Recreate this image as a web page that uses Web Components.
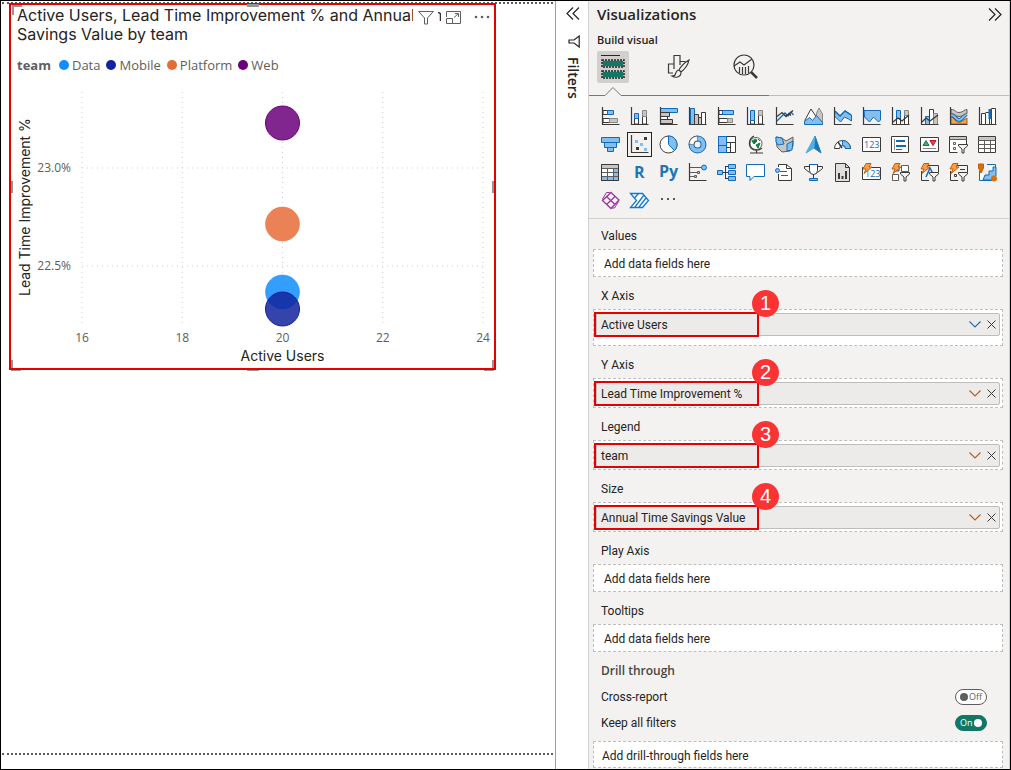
<!DOCTYPE html>
<html lang="en">
<head>
<meta charset="utf-8">
<title>Report editor</title>
<style>
body{margin:0;background:#fff;color:#252423;font:12px/16px Roboto,"Noto Sans",sans-serif}
</style>
</head>
<body>
<report-editor></report-editor>
<script>
function define(name, html, setup) {
  const t = document.createElement('template');
  t.innerHTML = html;
  customElements.define(name, class extends HTMLElement {
    connectedCallback() {
      if (this.shadowRoot) return;
      this.attachShadow({mode: 'open'}).appendChild(t.content.cloneNode(true));
      if (setup) setup(this, this.shadowRoot);
    }
  });
}

/* ---------- chart ---------- */
define('scatter-plot', `
<style>
:host{display:block}
svg{display:block;width:100%;height:234px;overflow:visible}
line{stroke:#cfcfcf;stroke-width:1;stroke-dasharray:1 4}
text{font-size:12px;fill:#605e5c}
circle{fill-opacity:.85;stroke-width:1}
</style>
<svg role="img" aria-label="Scatter chart">
  <g class="grid"></g>
  <circle cx="50%" cy="31" r="17" fill="#6b007b" stroke="#6b007b"/>
  <circle cx="50%" cy="132" r="17" fill="#e66c37" stroke="#e66c37" stroke-opacity=".5"/>
  <circle cx="50%" cy="200" r="17" fill="#118dff" stroke="#118dff" stroke-opacity=".5"/>
  <circle cx="50%" cy="217" r="17" fill="#12239e" stroke="#12239e"/>
</svg>`, (el, root) => {
  let s = '';
  [16, 18, 20, 22, 24].forEach((v, i) => {
    s += `<line x1="${i * 25}%" x2="${i * 25}%" y1="0" y2="234"/><text x="${i * 25}%" y="250" text-anchor="middle">${v}</text>`;
  });
  [['23.0%', 76], ['22.5%', 174]].forEach(([v, y]) => {
    s += `<line x1="0" x2="100%" y1="${y}" y2="${y}"/><text x="-11" y="${y + 4}" text-anchor="end">${v}</text>`;
  });
  root.querySelector('.grid').innerHTML = s;
});

define('legend-entry', `
<style>
:host{display:flex;align-items:center;gap:3px}
i{width:10px;height:10px;border-radius:50%;background:var(--dot)}
</style><i></i><slot></slot>`, el => el.style.setProperty('--dot', el.getAttribute('color')));

define('chart-visual', `
<style>
:host{display:block;position:relative;box-sizing:border-box;border:2px solid #e60000;background:#fff;padding:1px 11px 0 6px;height:367px}
h2{margin:0;font:400 16px/19px Inter,sans-serif}
.legend{display:flex;align-items:center;gap:6px;margin-top:12px;height:18px;font:13px/18px "Open Sans",sans-serif;color:#605e5c}
.legend b{margin-right:2px}
.body{display:flex;margin-top:18px;font-family:"Open Sans",sans-serif}
.ytitle{width:16px;writing-mode:vertical-rl;transform:rotate(180deg);text-align:center;font:14px/16px Inter,sans-serif;height:230px}
scatter-plot{flex:1;margin-left:49px}
.xtitle{margin:20px 0 0 65px;text-align:center;font:14px/20px Inter,sans-serif}
.tools{position:absolute;top:3px;right:0;display:flex;gap:3px}
button{border:0;padding:0;background:#fff;height:18px;width:25px;display:flex;align-items:center;justify-content:center}
svg{display:block}
.h{position:absolute;background:#979593}
.tc,.bc{left:50%;margin-left:-6px;width:12px;height:3px}.tc{top:-1px}.bc{bottom:-3px}
.lm,.rm{top:50%;margin-top:-6px;width:2px;height:12px}.lm{left:0}.rm{right:0}
.c{position:absolute;width:8px;height:8px;border:0 solid #979593}
.tl{left:1px;top:0;border-width:2px 0 0 2px}
.bl{left:0;bottom:-3px;border-width:0 0 3px 2px}.br{right:0;bottom:-3px;border-width:0 2px 3px 0}
.frame{position:absolute;inset:-2px;border:2px solid #e60000;pointer-events:none}
</style>
<h2><slot></slot></h2>
<div class="legend"><b>team</b><legend-entry color="#118dff">Data</legend-entry><legend-entry color="#12239e">Mobile</legend-entry><legend-entry color="#e66c37">Platform</legend-entry><legend-entry color="#6b007b">Web</legend-entry></div>
<div class="body"><div class="ytitle">Lead Time Improvement %</div><scatter-plot></scatter-plot></div>
<div class="xtitle">Active Users</div>
<div class="tools">
<button aria-label="Filters"><svg width="16" height="15" fill="none" stroke="#605e5c"><path d="M.7 1.5h14.6L9.5 8v6h-3V8z"/></svg></button>
<button aria-label="Focus mode"><svg width="15" height="13" fill="none" stroke="#605e5c"><path d="M.5 6V.5h14v12h-8v-5h-6v5h6M8 6.500L12 3M9 2.500h3.500V6"/></svg></button>
<button aria-label="More options"><svg width="16" height="4" fill="#605e5c"><circle cx="2" cy="2" r="1.300"/><circle cx="8" cy="2" r="1.300"/><circle cx="14" cy="2" r="1.300"/></svg></button>
</div>
<span class="h bc"></span><span class="c bl"></span><span class="c br"></span>
<div class="frame"></div>
<span class="h tc"></span><span class="h lm"></span><span class="h rm"></span><span class="c tl"></span>`);

define('report-canvas', `
<style>
:host{display:block;min-width:0;padding:1px 2px 14px 1px}
.page{height:100%;box-sizing:border-box;border:dotted #605e5c;border-width:2px 0}
chart-visual{margin:-1px 57px 0 7px}
</style>
<div class="page"><chart-visual>Active Users, Lead Time Improvement % and Annual Time Savings Value by team</chart-visual></div>`);

/* ---------- collapsed filters pane ---------- */
define('filters-pane', `
<style>
:host{display:flex;flex-direction:column;align-items:center;box-sizing:border-box;width:33px;border-left:1px solid #a19f9d;background:#fff;padding:6px 0 0 1px}
button{border:0;background:none;padding:0;display:block}
svg{display:block}
.f{margin:15px 0 0 2px}
h2{margin:9px 0 0;writing-mode:vertical-rl;font:600 14px/20px "Open Sans",sans-serif}
</style>
<button aria-label="Expand"><svg width="14" height="13" fill="none" stroke="#252423" stroke-width="1.200"><path d="M7 .5l-6 6 6 6M13 .5l-6 6 6 6"/></svg></button>
<svg class="f" width="12" height="13" fill="none" stroke="#252423" stroke-width="1.200"><path d="M11.200 1v11L6 8H1V5h5z"/></svg>
<h2>Filters</h2>`);

/* ---------- visual gallery ---------- */
const K = '#3b3a39', B = '#0f6cbd', L = '#83beec', G = '#c8c6c4';
const p = (d, s = K, f = 'none', w = 1) => `<path d="${d}" stroke="${s}" fill="${f}" stroke-width="${w}"/>`;
const axes = p('M1.500 0V17.500H18.500', K, 'none', 1.2);
const bolt = p('M4 .5h5L7 4h3L2 10.500 4 6H1z', '#c75b00', '#f5a04c');
const fun = p('M9.500 9.500h9v1.500l-3.500 3v4h-2v-4l-3.500-3z', K, '#f3f2f1');
const txt = (t, x, y, s, c, w = 400) => `<text x="${x}" y="${y}" font-size="${s}" font-weight="${w}" fill="${c}">${t}</text>`;
const ICONS = {
 'Stacked bar': p('M2 3.500h5v4H2z', K, '#fff') + p('M6.500 3.500h6v4h-6z', B, L) + p('M2 11.500h7v4H2z', K, '#fff') + p('M8.500 11.500h8v4h-8z', '#8a8886', G) + axes,
 'Stacked column': p('M4.500 10v7h4v-7zM12.500 8v9h4V8z', K, '#fff') + p('M4.500 6.500h4v5h-4z', B, L) + p('M12.500 3.500h4v6h-4z', '#8a8886', G) + axes,
 'Clustered bar': p('M1.500 1.500h17v4h-17z', B, L) + p('M1.500 5.500h9v4h-9z', K, G) + p('M1.500 9.500h7v3h-7z', K, '#fff') + p('M1.500 12.500h12v4h-12z', K, G) + axes,
 'Clustered column': p('M2.500 1.500h4v16h-4z', B, L) + p('M6.500 7.500h4v10h-4z', K, G) + p('M10.500 10.500h3v7h-3z', K, G) + p('M13.500 5.500h4v12h-4z', K, '#fff') + axes,
 '100% bar': p('M2 3.500h4v4H2z', K, '#fff') + p('M5.500 3.500h11v4h-11z', B, L) + p('M2 11.500h9v4H2z', K, '#fff') + p('M10.500 11.500h5v4h-5z', '#8a8886', G) + axes,
 '100% column': p('M4.500 12v5h4v-5zM12.500 8v9h4V8z', K, '#fff') + p('M4.500 3.500h4v10h-4z', B, L) + p('M12.500 3.500h4v5h-4z', '#8a8886', G) + axes,
 'Line': axes + p('M2 14l8-8 3 3 3-4 2.500 3', B, 'none', 1.3) + p('M2 9.500l5-4 4 4 3-3 2 2M11 9.500l7-6', K, 'none', 1.3),
 'Area': p('M10 17l3-12 2-4 3.500 6v10z', '#8a8886', G) + p('M1 13l6-11 6 9-4 6H1z', K, '#fff') + p('M.5 17.500v-3l5-4 3 3 4-5 6 7v2z', B, L),
 'Stacked area': p('M2 4l5 5 5-5 6.500 4v6l-3-2-4-2-4 5-6-6z', B, L) + p('M2 4l5 5 5-5 6 4', B, 'none', 1.5) + axes,
 '100% area': p('M2 3.500h16.500V13l-2 2-5-5-4 5-5-5z', B, L) + axes,
 'Line and stacked column': p('M5.500 3.500h4v14h-4z', B, L) + p('M5.500 11.500h4v6h-4z', K, '#fff') + p('M13.500 8.500h4v9h-4z', K, '#fff') + p('M13.500 3.500h4v5h-4z', '#8a8886', G) + axes + p('M2 15l5-4 4 3 7-6', K, 'none', 1.3),
 'Line and clustered column': p('M5.500 9.500h4v8h-4z', B, L) + p('M9.500 2.500h4v15h-4z', K, '#fff') + p('M13.500 6.500h4v11h-4z', '#8a8886', G) + axes + p('M2 15l4-4 4 3 8-6', K, 'none', 1.3),
 'Ribbon': p('M2 17V9l5 5 3 2 8-5v6z', '#c75b00', '#f5a04c') + p('M2 8c5 0 4 5 8 5s4-5 8-6', B, 'none', 4) + p('M2 8c5 0 4 5 8 5s4-5 8-6', L, 'none', 2) + p('M2 2.500c5 0 4 3 8 3s5-3 8-3v4c-3 0-4 3-8 3s-4-3-8-3z', '#605e5c', G) + axes,
 'Waterfall': p('M3.500 6.500h4v11h-4zM7.500 5.500h4v12M13.500 1.500h4v16h-4z', K, '#fff') + p('M12 2v10', B, 'none', 3) + axes,
 'Funnel': p('M.5 2.500h18v5H.5zM3.500 7.500h12v5h-12zM6.500 12.500h6v4h-6z', B, L),
 'Scatter': axes + p('M14 3.500h3M6 13.500h3', K, 'none', 3) + p('M5 6.500h3M10 9.500h3M14 14.500h3', L, 'none', 3),
 'Pie': '<circle cx="9.500" cy="9.500" r="8.500" fill="#fff" stroke="#3b3a39"/>' + p('M9.500 9.500V1a8.500 8.500 0 0 1 6 14.500z', B, L),
 'Donut': '<circle cx="9.500" cy="9.500" r="6" fill="none" stroke="#0f6cbd" stroke-width="6"/><circle cx="9.500" cy="9.500" r="6" fill="none" stroke="#83beec" stroke-width="4"/>' + p('M9.500 3.500a6 6 0 0 0-6 6', '#605e5c', 'none', 6) + p('M9 3.500a6 6 0 0 0-5.500 5.500', '#fff', 'none', 4),
 'Treemap': p('M1.500 1.500h17v16h-17z', K, '#fff') + p('M9.500 1.500v16M9.500 7.500h9M13.500 7.500v10M9.500 12.500h4', K) + p('M1.500 1.500h8v16h-8z', B, L) + p('M1.500 10.500h8', B),
 'Map': '<circle cx="10" cy="8.500" r="6" fill="#fff" stroke="#605e5c"/>' + p('M6 6l4-2 1 2-3 3zM10 10l4-2-2 5zM12 4l2 2', '#107c41', '#107c41') + p('M8 1a8 8 0 0 0-3 12c3 3 8 3 11 0M10.500 15v3M4 18h13', K, 'none', 1.2),
 'Filled map': p('M1 2l6 1 4 3 7-4v9l-3 5-8 1-5-5z', '#605e5c', G) + p('M1 2l6 1 2 6-6 1-2-3zM12 9l6-3-1 9-5 1z', B, L),
 'Azure map': p('M11 1l6 17-7-5z', '#1b76b8', '#1b76b8') + p('M11 1L2 18l8-5z', '#50a8dc', '#50b0e0'),
 'Gauge': p('M1.500 13.500a8 8 0 0 1 16 0h-5a3 3 0 0 0-6 0z', K, '#fff') + p('M9.500 5.500a8 8 0 0 1 8 8h-5a3 3 0 0 0-3-3z', B, L) + p('M9 13l-4-6', K, 'none', 1.5),
 'Card': p('M.5 2.500h18v14H.5z', K, '#fff') + txt('123', 2, 13, 9, B),
 'Multi-row card': p('M.5 1.500h17v16H.5z', K, '#fff') + p('M3.500 4v11', '#8a8886') + p('M5 6h9M5 11h10', B, 'none', 2) + p('M5 14.500h6', B),
 'KPI': p('M.5 2.500h18v14H.5z', K, '#fff') + p('M3 10.500l3-5 3 5z', '#107c41', '#55a36f') + p('M10 5.500h6l-3 5z', '#c50f1f', '#e8434a') + p('M3 13.500h13', '#8a8886'),
 'Slicer': p('M17.500 9V1.500H.5v16h8', K, '#fff') + p('M1 3h16', G, 'none', 2) + p('M.5 4.500h17M4.500 7.500h2v2h-2zM4.500 12.500h2v2h-2z', '#605e5c') + fun,
 'Table': p('M.5 1.500h17v16H.5z', K, '#fff') + p('M1 3.500h16', G, 'none', 3) + p('M.5 5.500h17M.5 9.500h17M.5 13.500h17M6.500 5.500v12M12.500 5.500v12', '#605e5c'),
 'Matrix': p('M.5 1.500h17v16H.5z', K, '#fff') + p('M12.500 5.500h5v12h-17v-4h12z', B, L) + p('M1 3.500h16', G, 'none', 3) + p('M.5 5.500h17M.5 9.500h17M.5 13.500h17M6.500 5.500v12M12.500 5.500v12', '#605e5c') + p('M.5 1.500h17v16H.5z', K),
 'R script': txt('R', 4, 15, 16, '#1b76b8', 700),
 'Python': txt('Py', 0, 14, 16, '#1b76b8', 700),
 'Key influencers': axes + p('M2 4.500h12', B) + '<circle cx="16" cy="4.500" r="2.500" fill="#83beec" stroke="#0f6cbd"/>' + p('M2 9.500h7M2 13.500h4', '#605e5c') + p('M9.500 8.500h2v2h-2zM6.500 12.500h2v2h-2z', '#605e5c', G),
 'Decomposition tree': p('M5 9.500h6M8.500 3v13M8.500 3.500h3M8.500 15.500h3') + p('M.5 7.500h5v4h-5zM11.500 1.500h7v4h-7zM11.500 7.500h7v4h-7zM11.500 13.500h7v4h-7z', B, L),
 'Q&A': p('M.5 1.500h18v12H8l-4 4v-4H.5z', B, '#fff'),
 'Narrative': p('M3.500 4V1.500h8l5 4v12h-13V11', K, '#fff') + p('M11.500 1.500v4h5') + '<circle cx="2.500" cy="7.500" r="2" fill="#83beec" stroke="#0f6cbd"/>' + p('M5 8.500h7M6 12.500h7', B),
 'Goals': p('M5.500 1.500h8v6a4 4 0 0 1-8 0z', K, '#fff') + p('M5 3.500H.5v2l5 4M14 3.500h4.500v2l-5 4M9.500 11v4') + p('M5 1.500h9M5.500 17.500v-2h8v2z', B, L),
 'Paginated report': p('M2.500.5h10l4 4v14h-14z', K, '#e1dfdd') + p('M12.500.5v4h4') + p('M6 10v6M9.500 13v3M13 8v8', K, 'none', 2),
 'New card': p('M.5 4.500h18v12H.5z', K, '#fff') + txt('123', 3, 14, 9, B) + bolt,
 'Button slicer': p('M10.500 2.500h7v6h-7zM1.500 11.500h6v6h-6z', '#605e5c', '#fff') + p('M8 3v5H3z', B, L) + fun + bolt,
 'Text slicer': p('M4 2.500h14.500V9M1.500 8v9.500H9', K) + p('M6 14l4-9 3 6', B, 'none', 1.5) + fun + bolt,
 'List slicer': p('M4 2.500h14.500V9M1.500 8v9.500H9M11 6.500h5', K) + p('M5.500 11.500h2v2h-2z', K) + fun + bolt,
 'ArcGIS': p('M1.500 8v9.500h13M9 1.500h8.500V11', B, '#fff') + p('M5 17l2-5h4V8h4V4h3v9l-5 4z', B, L) + p('M.5 1h5v4L3 10 .5 5z', '#c75b00', '#d8700c') + '<circle cx="16" cy="15.500" r="3" fill="#d8700c"/>',
 'Power Apps': p('M5.500 1.500h3l9 9-4 6.500h-3l-9-9z', '#94389c', 'none', 1) + p('M10 1.500l8 7.500-8 8.500L1.500 9.500zM5.500 5.500l8.500 8M14 5.500l-8.500 8', '#94389c', '#fbeffc', 1.3),
 'Power Automate': p('M.5 2.500H12.500l6 7-6 7H.5l6-7z', '#0f7ad6', '#fff', 1.3) + p('M4.500 7l4-4.500M5 16l9-12M9 16l7-9', '#0f7ad6', 'none', 1.3),
 'More visuals': '<circle cx="3" cy="8" r="1" fill="#252423"/><circle cx="9" cy="8" r="1" fill="#252423"/><circle cx="15" cy="8" r="1" fill="#252423"/>'
};
define('visual-gallery', `
<style>
:host{display:grid;grid-template-columns:repeat(14,1fr);grid-auto-rows:28px;padding:6px 7px 4px;border-bottom:1px solid #d2d0ce}
button{border:0;background:none;padding:0;display:grid;place-items:center}
button.on span{outline:1px solid #252423;outline-offset:2px}
span,svg{display:block}
svg{font-family:"Open Sans",sans-serif;overflow:visible}
</style>`, (el, root) => {
  for (const [name, art] of Object.entries(ICONS)) {
    const b = document.createElement('button');
    b.setAttribute('aria-label', name);
    if (name === 'Scatter') b.className = 'on';
    b.innerHTML = `<span><svg width="19" height="19">${art}</svg></span>`;
    root.append(b);
  }
});

/* ---------- field wells ---------- */
define('drop-zone', `
<style>
:host{display:block;box-sizing:border-box;border:1px dashed #bfbdbb;background:#fff;height:28px;line-height:28px;padding:0 10px}
</style><slot></slot>`);

define('field-well', `
<style>
:host{display:block;margin-bottom:6px}
h3{margin:0;padding-left:8px;font:400 12px/26px Roboto,sans-serif}
</style>
<h3></h3><slot></slot>`, (el, root) => { root.querySelector('h3').textContent = el.getAttribute('label'); });

define('field-chip', `
<style>
:host{display:block;position:relative;box-sizing:border-box;border:1px dashed #bfbdbb;background:#fff;padding:3px 2px 2px}
:host([roomy]){padding-bottom:9px}
.chip{display:flex;align-items:center;height:23px;box-sizing:border-box;border:1px solid #bfbdbb;border-radius:2px;background:#edebe9;padding-left:4px}
.name{flex:1}
button{border:0;padding:0;background:none;width:16px;height:16px;display:grid;place-items:center}
svg{display:block}
.mark{position:absolute;left:0;top:2px;width:161px;height:21px;border:2px solid #e60000}
.badge{position:absolute;left:158px;top:-20px;width:27px;height:27px;border-radius:50%;background:#fa3434;color:#fff;text-align:center;font:500 20px/27px "Liberation Sans",sans-serif}
</style>
<div class="chip"><span class="name"><slot></slot></span>
<button aria-label="Field options"><svg width="12" height="7" fill="none" stroke="var(--chev,#a8642c)" stroke-width="1.200"><path d="M.5.5L6 6l5.500-5.500"/></svg></button>
<button aria-label="Remove field"><svg width="9" height="9" fill="none" stroke="#3b3a39"><path d="M.5.5l8 8M8.500.5l-8 8"/></svg></button></div>
<div class="mark"></div><div class="badge"></div>`, (el, root) => {
  root.querySelector('.badge').textContent = el.getAttribute('step');
});

define('toggle-row', `
<style>
:host{display:block;padding:0 16px 0 8px}
label{display:flex;align-items:center;justify-content:space-between;height:26px}
.sw{position:relative;display:flex;align-items:center;justify-content:space-between;box-sizing:border-box;width:32px;height:16px;border:1px solid #605e5c;border-radius:8px;background:#fff;color:#605e5c;padding:0 4px;font:9px/14px "Open Sans",sans-serif}
.sw i{width:8px;height:8px;border-radius:50%;background:#605e5c}
.sw.on{background:#117865;border-color:#117865;color:#fff;flex-direction:row-reverse}
.sw.on i{background:#fff}
input{position:absolute;inset:0;margin:0;opacity:0}
</style>
<label><slot></slot><span class="sw"><i></i><span class="t"></span><input type="checkbox" role="switch"></span></label>`, (el, root) => {
  const on = el.hasAttribute('on'), input = root.querySelector('input');
  const paint = () => {
    root.querySelector('.sw').classList.toggle('on', input.checked);
    root.querySelector('.t').textContent = input.checked ? 'On' : 'Off';
  };
  input.checked = on;
  input.onchange = paint;
  paint();
});

define('pane-tabs', `
<style>
:host{display:block}
.row{display:flex;gap:34px;padding-left:8px}
button{border:0;padding:0;background:none;width:32px;height:32px;display:grid;place-items:center}
button.on{background:#d2d0ce;border-radius:2px}
svg{display:block}
.line{display:flex;align-items:flex-end;margin-top:4px}
.line:after{content:"";flex:1;border-bottom:1px solid #bebcba}
</style>
<div class="row">
<button class="on" aria-label="Build visual"><svg width="24" height="26" fill="none"><path d="M0 1.500h19" stroke="#252423"/><path d="M1 6h22v7H1zM1 17h22v7H1z" fill="#117865"/><path d="M1 6h22v7H1zM1 17h22v7H1z" stroke="#d2d0ce" stroke-width="1.500"/><path d="M1 6h22v7H1zM1 17h22v7H1z" stroke="#252423" stroke-width="1.500" stroke-dasharray="2 1"/></svg></button>
<button aria-label="Format visual"><svg width="24" height="26" fill="none" stroke="#3b3a39" stroke-width="1.200"><path d="M6 19H1.500V10H7v5M7 15V1.500h6V11M13 7.500h5.500"/><path d="M22 6c-5 3-8 6-10 10l2 2c4-3 7-7 8-12zM12 16c-3 0-3 3-4 5-1 1-2 1-3 1 3 2 9 2 9-4z" fill="#f3f2f1"/></svg></button>
<button aria-label="Analytics"><svg width="25" height="26" fill="none" stroke="#3b3a39" stroke-width="1.200"><circle cx="11" cy="11" r="10"/><path d="M1 12l6-4 4 3 8-6M6.500 19v-6M9.500 20v-7M12.500 20v-7M15.500 19v-7"/><path d="M18 18l6 6" stroke-width="2.500"/></svg></button>
</div>
<div class="line"><svg width="180" height="9" fill="none" stroke="#797775"><path d="M0 8.500h16l8-8 8 8h148"/></svg></div>`);

define('visualizations-pane', `
<style>
:host{display:block;box-sizing:border-box;width:422px;border:solid #d2d0ce;border-width:0 1px;background:#f3f2f1}
header{display:flex;align-items:center;justify-content:space-between;padding:3px 7px 0 8px}
h1{margin:0;font:600 15px/20px "Open Sans",sans-serif}
h2{margin:0;padding:8px 8px 3px;font:600 11px/16px "Open Sans",sans-serif}
header button{border:0;background:none;padding:0}
svg{display:block}
.wells{padding:4px 6px 0 4px}
.drill{margin:0;padding-left:8px;font:600 12px/26px "Open Sans",sans-serif;color:#484644}
.last{margin-top:5px;height:27px;padding:0 8px}
</style>
<header><h1>Visualizations</h1><button aria-label="Collapse"><svg width="14" height="13" fill="none" stroke="#252423" stroke-width="1.200"><path d="M1 .5l6 6-6 6M7 .5l6 6-6 6"/></svg></button></header>
<h2>Build visual</h2>
<pane-tabs></pane-tabs>
<visual-gallery></visual-gallery>
<div class="wells">
<field-well label="Values"><drop-zone>Add data fields here</drop-zone></field-well>
<field-well label="X Axis"><field-chip roomy step="1" style="--chev:#2b6cb0">Active Users</field-chip></field-well>
<field-well label="Y Axis"><field-chip step="2">Lead Time Improvement %</field-chip></field-well>
<field-well label="Legend"><field-chip step="3">team</field-chip></field-well>
<field-well label="Size"><field-chip step="4">Annual Time Savings Value</field-chip></field-well>
<field-well label="Play Axis"><drop-zone>Add data fields here</drop-zone></field-well>
<field-well label="Tooltips"><drop-zone>Add data fields here</drop-zone></field-well>
<h3 class="drill">Drill through</h3>
<toggle-row>Cross-report</toggle-row>
<toggle-row on>Keep all filters</toggle-row>
<drop-zone class="last">Add drill-through fields here</drop-zone>
</div>`);

define('report-editor', `
<style>
:host{display:flex;box-sizing:border-box;min-height:100vh;border:1px solid #000}
report-canvas{flex:1}
</style>
<report-canvas></report-canvas><filters-pane></filters-pane><visualizations-pane></visualizations-pane>`);
</script>
</body>
</html>
